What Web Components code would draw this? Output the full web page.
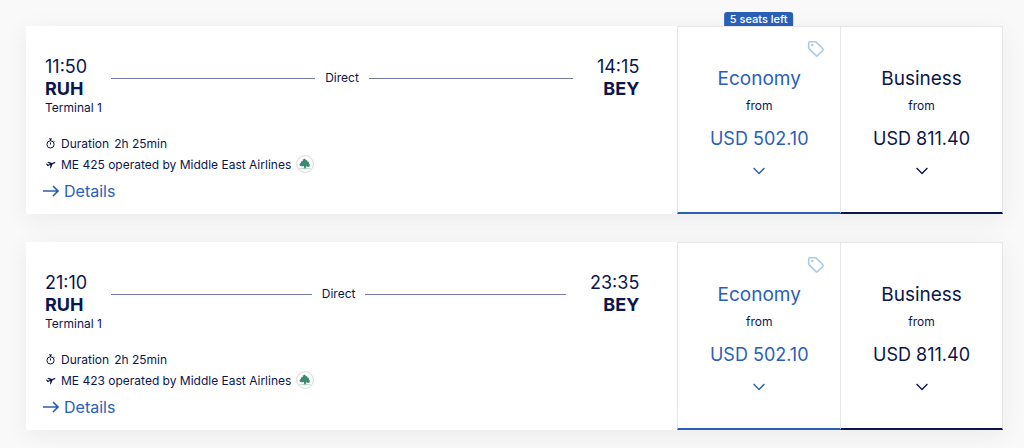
<!DOCTYPE html>
<html lang="en">
<head>
<meta charset="utf-8">
<meta name="viewport" content="width=device-width, initial-scale=1">
<title>Select your flight</title>
<style>
  body {
    --navy: #0b164d;
    --blue: #2a5fb8;
    --edge: #e6e6e6;
    margin: 0;
    background: #f9f9f9;
    color: var(--navy);
    font-family: Inter, "Liberation Sans", sans-serif;
    font-size: 12px;
  }
</style>
</head>
<body>
<flight-list>
  <flight-card departs="11:50" from="RUH" terminal="Terminal 1" arrives="14:15" to="BEY" duration="2h 25min" flight="ME 425 operated by Middle East Airlines">
    <fare-option slot="fares" cabin="Economy" price="USD 502.10" seats="5 seats left" offer></fare-option>
    <fare-option slot="fares" cabin="Business" price="USD 811.40"></fare-option>
  </flight-card>
  <flight-card departs="21:10" from="RUH" terminal="Terminal 1" arrives="23:35" to="BEY" duration="2h 25min" flight="ME 423 operated by Middle East Airlines">
    <fare-option slot="fares" cabin="Economy" price="USD 502.10" offer></fare-option>
    <fare-option slot="fares" cabin="Business" price="USD 811.40"></fare-option>
  </flight-card>
</flight-list>

<template id="flight-list">
  <style>
    :host { display: block; }
    main { display: grid; gap: 28px; padding: 26px 21px 18px 26px; }
  </style>
  <main><slot></slot></main>
</template>

<template id="flight-card">
  <style>
    :host { display: block; }
    article {
      display: grid;
      grid-template-columns: 4fr 1fr 1fr;
      background: #fff;
      box-shadow: 0 5px 24px rgba(0, 0, 0, .06);
    }
    .info { padding: 30px 38px 11px 19px; min-width: 0; }
    .route { display: flex; align-items: center; gap: 24px; }
    .stop { font-size: 18px; line-height: 22px; }
    .stop.end { text-align: right; }
    .stop strong { display: block; font-weight: 700; }
    .track { flex: 1; display: flex; align-items: center; gap: 10px; line-height: 16px; }
    .track::before, .track::after { content: ""; flex: 1; height: 1px; background: #737aa3; }
    .terminal { line-height: 16px; }
    .facts { margin: 17px 0 4px; padding: 0; list-style: none; }
    .facts li { display: flex; align-items: center; gap: 5px; height: 22px; }
    .facts li:first-child { height: 20px; }
    .facts svg { flex: none; }
    .glyph { width: 11px; height: 11px; }
    .logo { width: 18px; height: 18px; }
    a { display: inline-flex; align-items: center; gap: 5px; margin-left: -2px; color: var(--blue); font-size: 16px; line-height: 24px; text-decoration: none; }
  </style>
  <article>
    <section class="info">
      <div class="route">
        <div class="stop"><div id="departs"></div><strong id="from"></strong></div>
        <div class="track">Direct</div>
        <div class="stop end"><div id="arrives"></div><strong id="to"></strong></div>
      </div>
      <div class="terminal" id="terminal"></div>
      <ul class="facts">
        <li>
          <svg class="glyph" viewBox="0 0 11 11" fill="none" stroke="currentColor" aria-hidden="true"><circle cx="5.5" cy="6.4" r="3.6"/><path d="M4 .9h3M5.5 1v1.8M5.5 4.5v2M8.4 2.7l1 1"/></svg>
          <span>Duration</span><span id="duration"></span>
        </li>
        <li>
          <svg class="glyph" viewBox="0 0 11 11" fill="currentColor" aria-hidden="true"><path d="M1 4.8l.8-.3 1.4 1.1L5 4.9 2.2 3.2l1-.4 4 1.2 1.7-.7c.7-.3 1.3-.2 1.4.1.1.4-.3.8-.9 1L7.7 5.1 6 9.1l-1 .3.4-3.4-2.6 1-.6-.2z"/></svg>
          <span id="flight"></span>
          <svg class="logo" viewBox="0 0 18 18" role="img" aria-label="Middle East Airlines"><circle cx="9" cy="9" r="8.4" fill="#fff" stroke="#d5d8d8"/><path d="M8.8 3.6L6.6 4.8l.3.9-2 1 .1 1.1-1.6 1.4.5 1.5 1.4.6 2.6-.2.3 1.4-.8 1.1h3l-.6-1.1.2-1.2 2.2.6 1.5-.7.2-1.4-1-1.1.2-1.1-1.5-1-.4-1.1-1.2-.6z" fill="#3b8a6c"/><path d="M3.6 13.7h10.8" stroke="#9bc5b3" stroke-width=".7"/></svg>
        </li>
      </ul>
      <a href="#details">
        <svg width="16" height="12" viewBox="0 0 16 12" fill="none" stroke="currentColor" stroke-width="1.6" aria-hidden="true"><path d="M0 6h15M10 1l5 5-5 5"/></svg>
        Details
      </a>
    </section>
    <slot name="fares"></slot>
  </article>
</template>

<template id="fare-option">
  <style>
    :host { display: block; position: relative; --tone: var(--navy); }
    :host([cabin="Economy"]) { --tone: var(--blue); }
    button {
      display: flex;
      flex-direction: column;
      align-items: center;
      box-sizing: border-box;
      width: 100%;
      height: 100%;
      margin: 0;
      padding: 40px 0 0;
      border: 1px solid var(--edge);
      border-right-width: 0;
      border-bottom: 2px solid var(--tone);
      background: #fff;
      color: var(--tone);
      font: inherit;
      font-size: 18px;
      line-height: 24px;
      cursor: pointer;
    }
    :host([cabin="Business"]) button { border-right-width: 1px; }
    .cabin { font-size: 19px; }
    .from { margin: 7px 0 13px; color: var(--navy); font-size: 12px; line-height: 16px; }
    .chevron { margin-top: 16px; }
    .badge {
      position: absolute;
      bottom: 100%;
      left: 50%;
      transform: translateX(-50%);
      padding: 0 6px;
      border-radius: 3px 3px 0 0;
      background: var(--blue);
      color: #fff;
      font-size: 11px;
      font-weight: 500;
      line-height: 14px;
      white-space: nowrap;
    }
    .tag { position: absolute; top: 14px; right: 15px; color: #a9cbea; }
    [hidden] { display: none; }
  </style>
  <span class="badge" id="seats"></span>
  <button type="button">
    <span class="cabin" id="cabin"></span>
    <span class="from">from</span>
    <span id="price"></span>
    <svg class="chevron" width="12" height="8" viewBox="0 0 12 8" fill="none" stroke="currentColor" stroke-width="1.4" aria-hidden="true"><path d="M.6 1L6 6.4 11.4 1"/></svg>
  </button>
  <svg class="tag" id="tag" width="18" height="18" viewBox="0 0 18 18" fill="none" stroke="currentColor" stroke-width="1.6" stroke-linejoin="round" aria-hidden="true"><path d="M3 1.7h5.3c.4 0 .7.1 1 .4l6.6 6.6c.5.5.5 1 0 1.5l-5.4 5.4c-.5.5-1 .5-1.5 0L2.2 8.9c-.3-.3-.5-.6-.5-1V3c0-.8.5-1.3 1.3-1.3z"/><circle cx="5.2" cy="5" r=".5"/></svg>
</template>

<script>
  class TemplateElement extends HTMLElement {
    connectedCallback() {
      if (this.shadowRoot) return;
      const root = this.attachShadow({ mode: "open" });
      root.append(document.getElementById(this.localName).content.cloneNode(true));
      this.fill(root);
    }
    fill() {}
    put(root, names) {
      for (const name of names) root.getElementById(name).textContent = this.getAttribute(name) || "";
    }
  }

  class FlightList extends TemplateElement {}

  class FlightCard extends TemplateElement {
    fill(root) {
      this.put(root, ["departs", "from", "terminal", "arrives", "to", "duration", "flight"]);
    }
  }

  class FareOption extends TemplateElement {
    fill(root) {
      this.put(root, ["cabin", "price", "seats"]);
      root.getElementById("seats").hidden = !this.hasAttribute("seats");
      root.getElementById("tag").style.display = this.hasAttribute("offer") ? "block" : "none";
    }
  }

  customElements.define("flight-list", FlightList);
  customElements.define("flight-card", FlightCard);
  customElements.define("fare-option", FareOption);
</script>
</body>
</html>
